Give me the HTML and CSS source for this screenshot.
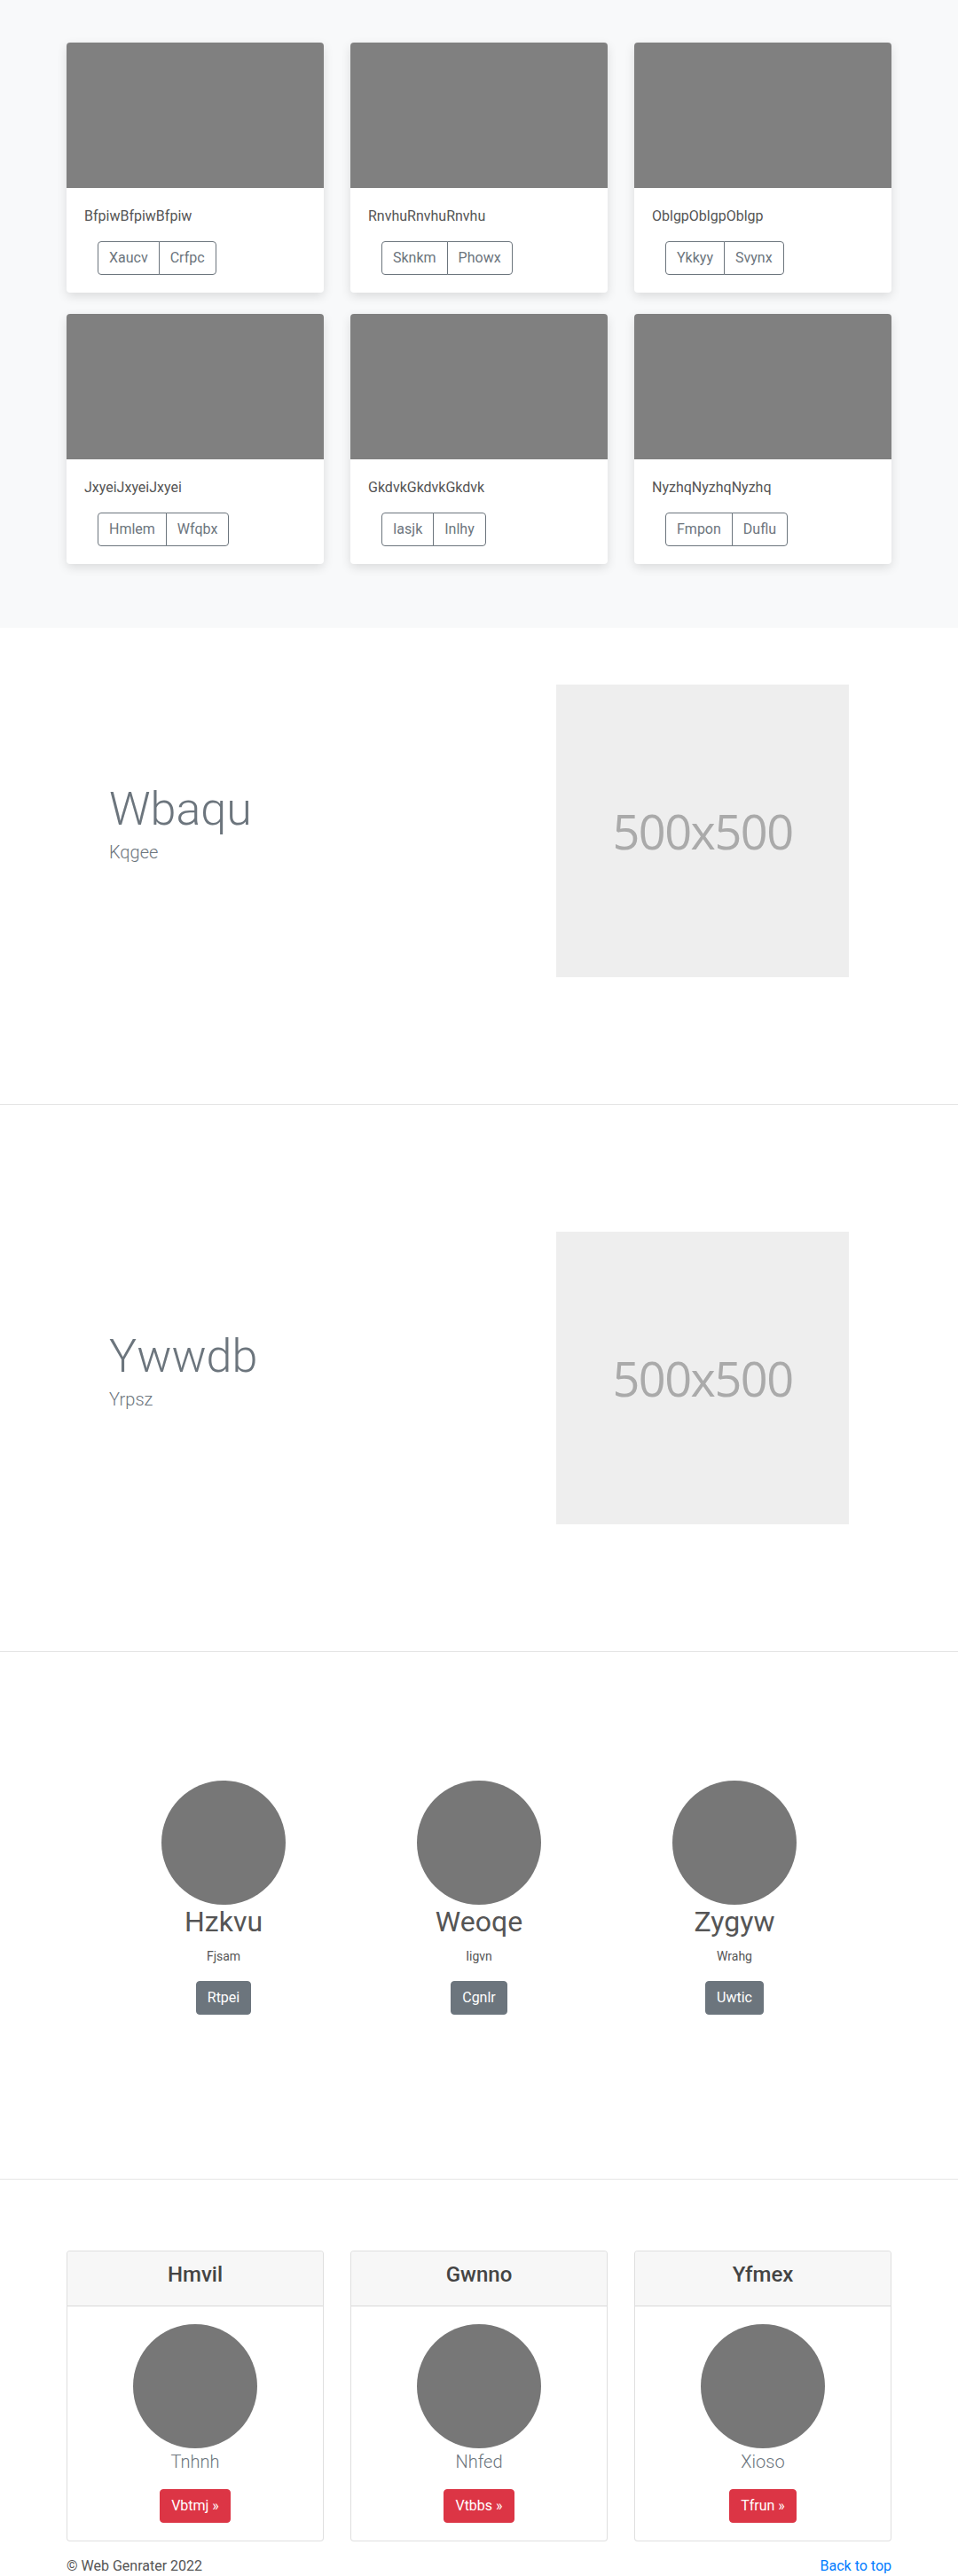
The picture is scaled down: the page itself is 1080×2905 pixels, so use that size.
FILE: index.html
```html
<!DOCTYPE html>
<html lang="en">
<head>
<meta charset="utf-8">
<title>Web Genrater</title>
<link rel="stylesheet" href="styles.css">
</head>
<body>
<main>
  <section class="album">
    <div class="container">
      <div class="grid3">
        <div class="card"><div class="card-img"></div><div class="card-body"><p class="card-text">BfpiwBfpiwBfpiw</p><div class="btn-group"><span class="btn btn-outline">Xaucv</span><span class="btn btn-outline">Crfpc</span></div></div></div>
        <div class="card"><div class="card-img"></div><div class="card-body"><p class="card-text">RnvhuRnvhuRnvhu</p><div class="btn-group"><span class="btn btn-outline">Sknkm</span><span class="btn btn-outline">Phowx</span></div></div></div>
        <div class="card"><div class="card-img"></div><div class="card-body"><p class="card-text">OblgpOblgpOblgp</p><div class="btn-group"><span class="btn btn-outline">Ykkyy</span><span class="btn btn-outline">Svynx</span></div></div></div>
        <div class="card"><div class="card-img"></div><div class="card-body"><p class="card-text">JxyeiJxyeiJxyei</p><div class="btn-group"><span class="btn btn-outline">Hmlem</span><span class="btn btn-outline">Wfqbx</span></div></div></div>
        <div class="card"><div class="card-img"></div><div class="card-body"><p class="card-text">GkdvkGkdvkGkdvk</p><div class="btn-group"><span class="btn btn-outline">Iasjk</span><span class="btn btn-outline">Inlhy</span></div></div></div>
        <div class="card"><div class="card-img"></div><div class="card-body"><p class="card-text">NyzhqNyzhqNyzhq</p><div class="btn-group"><span class="btn btn-outline">Fmpon</span><span class="btn btn-outline">Duflu</span></div></div></div>
      </div>
    </div>
  </section>

  <section class="feature feature-first">
    <div class="container">
      <div class="feature-row">
        <div class="feature-text">
          <h1 class="feature-title">Wbaqu</h1>
          <p class="feature-lead">Kqgee</p>
        </div>
        <div class="feature-media"><div class="placeholder">500x500</div></div>
      </div>
    </div>
  </section>
  <hr class="divider">

  <section class="feature">
    <div class="container">
      <div class="feature-row">
        <div class="feature-text">
          <h1 class="feature-title">Ywwdb</h1>
          <p class="feature-lead">Yrpsz</p>
        </div>
        <div class="feature-media"><div class="placeholder">500x500</div></div>
      </div>
    </div>
  </section>
  <hr class="divider">

  <section class="team">
    <div class="team-grid">
      <div class="person"><div class="circle"></div><h2 class="person-name">Hzkvu</h2><p class="person-role">Fjsam</p><span class="btn btn-secondary">Rtpei</span></div>
      <div class="person"><div class="circle"></div><h2 class="person-name">Weoqe</h2><p class="person-role">Iigvn</p><span class="btn btn-secondary">Cgnlr</span></div>
      <div class="person"><div class="circle"></div><h2 class="person-name">Zygyw</h2><p class="person-role">Wrahg</p><span class="btn btn-secondary">Uwtic</span></div>
    </div>
  </section>
  <hr class="divider">

  <section class="pricing">
    <div class="container">
      <div class="grid3">
        <div class="pcard"><div class="pcard-header"><h4 class="pcard-title">Hmvil</h4></div><div class="pcard-body"><div class="circle"></div><p class="pcard-name">Tnhnh</p><span class="btn btn-danger">Vbtmj &raquo;</span></div></div>
        <div class="pcard"><div class="pcard-header"><h4 class="pcard-title">Gwnno</h4></div><div class="pcard-body"><div class="circle"></div><p class="pcard-name">Nhfed</p><span class="btn btn-danger">Vtbbs &raquo;</span></div></div>
        <div class="pcard"><div class="pcard-header"><h4 class="pcard-title">Yfmex</h4></div><div class="pcard-body"><div class="circle"></div><p class="pcard-name">Xioso</p><span class="btn btn-danger">Tfrun &raquo;</span></div></div>
      </div>
    </div>
  </section>

  <footer class="container footer">
    <p class="footer-copy">&copy; Web Genrater 2022</p>
    <p class="footer-top"><a href="#" class="footer-link">Back to top</a></p>
  </footer>
</main>
</body>
</html>
```

FILE: styles.css
```css
* { box-sizing: border-box; }

body {
  margin: 0;
  font-family: Roboto, "Liberation Sans", Arial, sans-serif;
  font-size: 16px;
  line-height: 1.5;
  color: #444;
  background: #fff;
}

.container {
  width: 960px;
  margin: 0 auto;
  padding: 0 15px;
}

.grid3 {
  display: grid;
  grid-template-columns: repeat(3, 1fr);
  column-gap: 30px;
  row-gap: 24px;
}

/* Album */
.album {
  background: #f8f9fa;
  padding: 48px 0 72px;
}

.card {
  background: #fff;
  border-radius: 4px;
  overflow: hidden;
  box-shadow: 0 4px 12px rgba(0, 0, 0, 0.12);
}

.card-img {
  height: 164px;
  background: #808080;
}

.card-body {
  padding: 20px;
}

.card-text {
  margin: 0 0 16px;
  color: #555;
}

.btn-group {
  display: inline-flex;
  margin-left: 15px;
}

.btn {
  display: inline-block;
  font-size: 16px;
  line-height: 24px;
  padding: 6px 12px;
  border: 1px solid transparent;
  border-radius: 4px;
}

.btn-outline {
  color: #6c757d;
  border-color: #6c757d;
  background: #fff;
}

.btn-group .btn:first-child {
  border-top-right-radius: 0;
  border-bottom-right-radius: 0;
}

.btn-group .btn:last-child {
  border-top-left-radius: 0;
  border-bottom-left-radius: 0;
  margin-left: -1px;
}

/* Features */
.feature {
  padding: 143px 0;
}

.feature-first {
  padding-top: 64px;
}

.feature-row {
  display: flex;
  align-items: center;
}

.feature-text {
  flex: 0 0 465px;
  padding-left: 48px;
}

.feature-media {
  flex: 1;
  padding-left: 87px;
}

.feature-title {
  font-size: 52px;
  font-weight: 300;
  line-height: 1.2;
  margin: 0 0 2px;
  color: #6c757d;
}

.feature-lead {
  font-size: 20px;
  font-weight: 300;
  margin: 0 0 16px;
  color: #6c757d;
}

.placeholder {
  width: 330px;
  height: 330px;
  background: #eee;
  color: #aaa;
  display: flex;
  align-items: center;
  justify-content: center;
  font-family: "Open Sans", "Noto Sans", sans-serif;
  font-size: 54px;
  letter-spacing: -1.5px;
}

.divider {
  border: 0;
  border-top: 1px solid #e5e5e5;
  margin: 0;
}

/* Team */
.team {
  padding: 145px 0 185px;
}

.team-grid {
  width: 864px;
  margin: 0 auto;
  display: grid;
  grid-template-columns: repeat(3, 288px);
  text-align: center;
}

.circle {
  width: 140px;
  height: 140px;
  border-radius: 50%;
  background: #777;
  margin: 0 auto;
}

.person-name {
  font-size: 32px;
  font-weight: 400;
  line-height: 1.2;
  margin: 0 0 10px;
  color: #555;
}

.person-role {
  font-size: 14px;
  line-height: 21px;
  margin: 0 0 17px;
  color: #555;
}

.btn-secondary {
  background: #6c757d;
  border-color: #6c757d;
  color: #fff;
}

/* Pricing */
.pricing {
  padding-top: 80px;
}

.pcard {
  border: 1px solid rgba(0, 0, 0, 0.125);
  border-radius: 4px;
  text-align: center;
  background: #fff;
}

.pcard-header {
  background: #f7f7f7;
  border-bottom: 1px solid rgba(0, 0, 0, 0.125);
  padding: 12px 20px;
  border-radius: 3px 3px 0 0;
}

.pcard-title {
  font-size: 24px;
  font-weight: 500;
  line-height: 1.2;
  margin: 0 0 8px;
  color: #444;
}

.pcard-body {
  padding: 20px;
}

.pcard-name {
  font-size: 20px;
  font-weight: 300;
  line-height: 30px;
  margin: 0 0 16px;
  color: #6c757d;
}

.btn-danger {
  background: #dc3545;
  border-color: #dc3545;
  color: #fff;
}

/* Footer */
.footer {
  display: flex;
  justify-content: space-between;
  padding-top: 16px;
}

.footer p {
  margin: 0;
}

.footer-copy {
  color: #555;
}

.footer-link {
  color: #007bff;
  text-decoration: none;
}
```
